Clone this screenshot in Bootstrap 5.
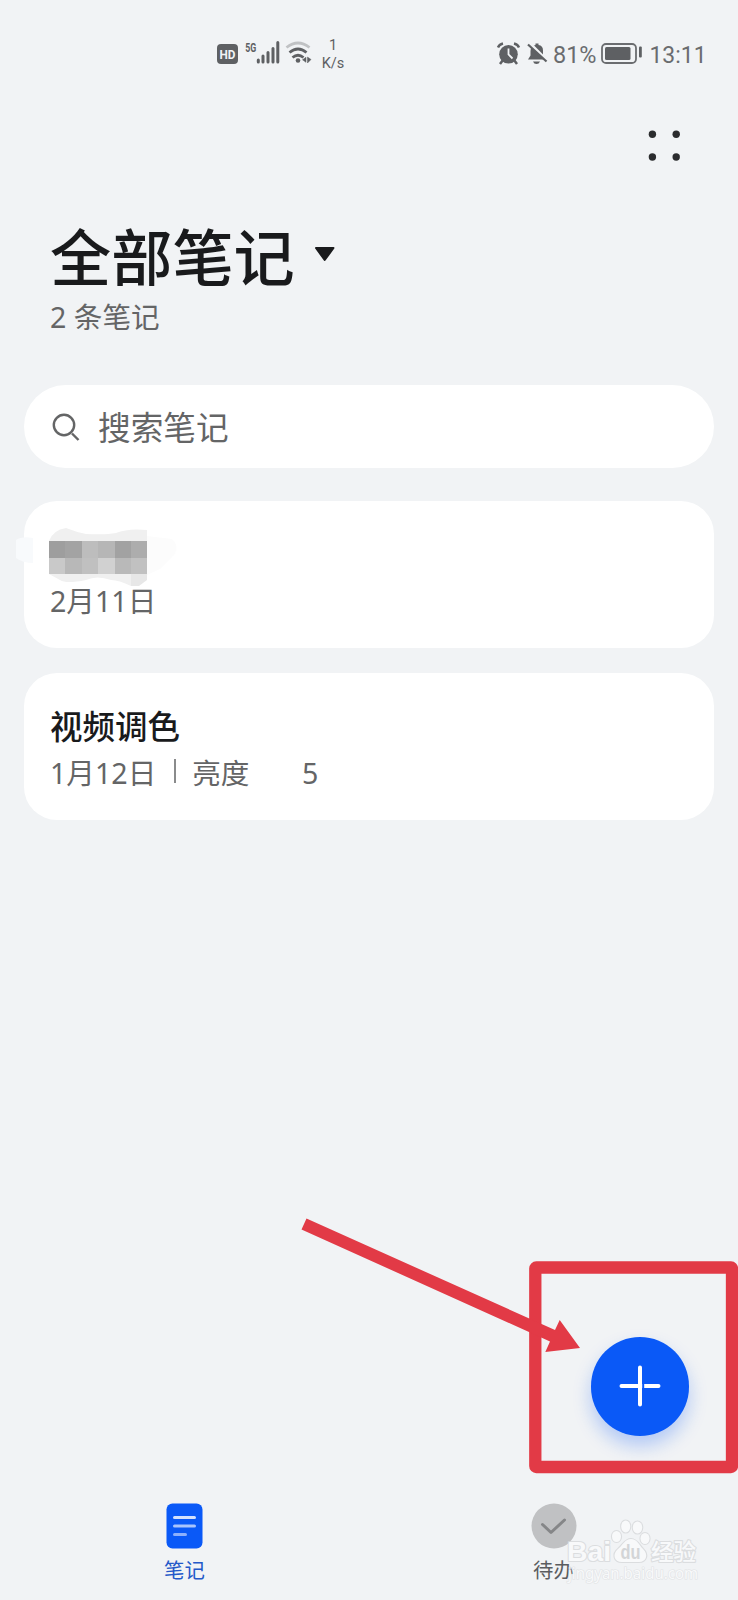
<!DOCTYPE html>
<html lang="zh-CN">
<head>
<meta charset="utf-8">
<meta name="viewport" content="width=device-width, initial-scale=1">
<title>全部笔记</title>
<link href="https://cdn.jsdelivr.net/npm/bootstrap@5.3.0/dist/css/bootstrap.min.css" rel="stylesheet">
<style>
  body { background: #f1f3f5; font-family: "Noto Sans", "Noto Sans CJK SC", sans-serif; color: #191a1c; }
  .screen { width: 738px; height: 1600px; overflow: hidden; }
  .status { height: 80px; padding: 28px 30px 0 216px; color: #5e6063; font-family: Roboto, sans-serif; }
  .status svg { display: block; flex: none; }
  .rate { font-size: 14.5px; line-height: 18px; width: 30px; margin-left: 4px; padding-top: 9px; }
  .stat-text { margin-top: 10px; }
  .toolbar-top { height: 131px; padding: 48px 56px 0; }
  .heading { height: 174px; padding: 11px 49px 0 50px; }
  .heading h1 { font-size: 61.2px; line-height: 66px; font-weight: 500; font-family: "Noto Sans CJK SC", sans-serif; }
  .heading svg { margin: 24px 0 0 19px; }
  .heading .sub { margin-top: 10px; line-height: 38px; }
  .grey { color: #646566; }
  .sub { font-size: 28.6px; line-height: 40px; }
  .search { height: 83px; border-radius: 42px; padding: 0 28px; font-size: 32.7px; line-height: 40px; }
  .search span { margin: 3px 0 0 18px; }
  .note { height: 147px; border-radius: 33px; padding: 34px 26px 0; }
  .note-title { height: 40px; font-size: 32.5px; line-height: 40px; font-weight: 500; }
  .blur-out { left: -9px; top: 25px; }
  .gap-mid { margin-left: 52.5px; }
  .bar { width: 2px; height: 24px; background: #8a8b8c; margin: 6px 16px 0 18px; }
  .tabs { top: 1503px; font-size: 20.4px; line-height: 30px; }
  .tabs span { margin-top: 6px; }
  .fab { left: 590.5px; top: 1337px; width: 98.5px; height: 98.5px; background: #0a59f7; box-shadow: 0 10px 18px rgba(10,89,247,.27); }
  .marks, .wm { left: 0; top: 0; }
</style>
</head>
<body>
<div class="screen position-relative d-flex flex-column">
  <header class="status d-flex align-items-start">
    <svg width="98" height="48" viewBox="216 28 98 48">
      <rect x="217" y="44" width="21" height="20" rx="4" fill="#5e6063"/>
      <text x="227.5" y="58.8" font-size="13" font-weight="700" fill="#f1f3f5" text-anchor="middle" textLength="16" lengthAdjust="spacingAndGlyphs">HD</text>
      <text x="245.3" y="52.2" font-size="13" font-weight="700" fill="#5e6063" textLength="11" lengthAdjust="spacingAndGlyphs">5G</text>
      <g stroke="#5e6063" stroke-width="3" stroke-linecap="round"><path d="M258.3 60v2M263 56v6M268 52.500v9.500M273 48.500v13.500M277.800 42.500v19.500"/></g>
      <g fill="none" stroke="#5e6063" stroke-width="2.800">
        <path d="M286.500 47.500q11.500-9 23 0" stroke="#c0c2c4"/>
        <path d="M289.500 52.500q8.500-7 17 0"/><path d="M292.500 57.500q5.500-4.500 11 0"/>
      </g>
      <circle cx="298" cy="60.500" r="2.300" fill="#5e6063"/>
      <path d="M302.500 59.800l3.500-2.500v5zM307.500 57v6l3.500-3.500z" fill="#5e6063" stroke="#5e6063" stroke-width=".5"/>
    </svg>
    <div class="rate text-center">1<br>K/s</div>
    <div class="d-flex ms-auto align-items-start">
      <svg width="56" height="48" viewBox="496 28 56 48">
        <g fill="#5e6063"><circle cx="508.500" cy="54.300" r="9.300"/>
        <path d="M503 60l-3 4M514 60l3 4" stroke="#5e6063" stroke-width="2.500"/></g>
        <path d="M498 47.500q1-3 5-4M519 47.500q-1-3-5-4" fill="none" stroke="#5e6063" stroke-width="2.400"/>
        <path d="M508.500 48.500v6l4 4" fill="none" stroke="#f1f3f5" stroke-width="1.800"/>
        <path d="M530.500 50v5.500l-2.500 4h18l-3-4v-5q0-5-4.500-5.500v-1.500h-3v1.500q-5 1-5 6zM533 61.500h7q-1 2.500-3.500 2.500t-3.500-2.500z" fill="#5e6063"/>
        <path d="M530 43.500l18 18" stroke="#f1f3f5" stroke-width="3"/>
        <path d="M528 44.500l18.500 17" stroke="#5e6063" stroke-width="2.200"/>
      </svg>
      <svg class="stat-text" width="46" height="36" viewBox="0 0 46 36"><text x="1" y="25" font-size="24" fill="#6a6c6f" textLength="43.5" lengthAdjust="spacingAndGlyphs">81%</text></svg>
      <svg width="50" height="48" viewBox="598 28 50 48">
        <rect x="602" y="44" width="34" height="19" rx="4" fill="none" stroke="#6b6d70" stroke-width="1.800"/>
        <rect x="605" y="47" width="25.500" height="13" rx="1.500" fill="#5e6063"/>
        <rect x="639" y="46.500" width="2.800" height="11" rx="1" fill="#5e6063"/>
      </svg>
      <svg class="stat-text" width="60" height="36" viewBox="0 0 60 36"><text x="1.500" y="25" font-size="24" fill="#6a6c6f" textLength="57" lengthAdjust="spacingAndGlyphs">13:11</text></svg>
    </div>
  </header>

  <div class="toolbar-top d-flex justify-content-end">
    <svg width="36" height="36" viewBox="646 128 36 36" fill="#2b2c2e"><circle cx="652.400" cy="134.300" r="3.700"/><circle cx="676.200" cy="134.300" r="3.700"/><circle cx="652.400" cy="157" r="3.700"/><circle cx="676.200" cy="157" r="3.700"/></svg>
  </div>

  <section class="heading">
    <div class="d-flex"><h1 class="mb-0">全部笔记</h1>
      <svg width="22" height="18" viewBox="0 0 22 18"><path d="M2 2h17.500l-8.800 12z" fill="#191a1c" stroke="#191a1c" stroke-width="2" stroke-linejoin="round"/></svg>
    </div>
    <div class="sub grey">2 条笔记</div>
  </section>

  <main class="d-flex flex-column px-4">
    <div class="search bg-white d-flex align-items-center grey">
      <svg width="28" height="28" viewBox="0 0 28 28" fill="none" stroke="#646566" stroke-width="2.400"><circle cx="12" cy="12" r="10.200"/><path d="M20 20.500l6.500 6.500"/></svg>
      <span>搜索笔记</span>
    </div>

    <article class="note bg-white position-relative" style="margin-top:32.5px">
      <svg class="blur-out position-absolute" width="170" height="64" viewBox="15 526 170 64">
        <path d="M16 540q6-4 17-2v25q-10 0-17-5z" fill="#f8fafc"/>
        <path d="M147 536l25 3q9 9 0 18l-12 12-13 6z" fill="#fcfcfc"/>
        <path d="M49 541q4-11 17-13 10 4 20 6 20 1 30-1 12-5 31-3v48q-7 8-16 8-12-6-20-6-14-5-25 0-20 4-26 0l-11-6z" fill="#f0f0f0"/>
        <g shape-rendering="crispEdges">
          <path d="M49 541h16v17H49z" fill="#9e9e9e"/><path d="M65 541h17v17H65z" fill="#a3a3a3"/><path d="M82 541h16v17H82z" fill="#bdbdbd"/><path d="M98 541h17v17H98z" fill="#b6b6b6"/><path d="M115 541h16v17h-16z" fill="#a2a2a2"/><path d="M131 541h16v17h-16z" fill="#adadad"/>
          <path d="M49 558h16v16H49z" fill="#c9c9c9"/><path d="M65 558h17v16H65z" fill="#b8b8b8"/><path d="M82 558h16v16H82z" fill="#c0c0c0"/><path d="M98 558h17v16H98z" fill="#d1d1d1"/><path d="M115 558h16v16h-16z" fill="#b9b9b9"/><path d="M131 558h16v16h-16z" fill="#c1c1c1"/>
        </g>
        <path d="M131 574h16v6l-8 6h-8z" fill="#e7e7e7"/>
      </svg>
      <div class="note-title"></div>
      <div class="sub grey" style="margin-top:6px">2月11日</div>
    </article>

    <article class="note bg-white" style="margin-top:25.500px">
      <div class="note-title">视频调色</div>
      <div class="sub grey d-flex" style="margin-top:6px"><span>1月12日</span><i class="bar"></i><span>亮度</span><span class="gap-mid">5</span></div>
    </article>
  </main>

  <nav class="tabs position-absolute start-0 w-100 d-flex text-center">
    <div class="w-50 d-flex flex-column align-items-center" style="color:#2459c9">
      <svg width="37" height="46" viewBox="0 0 37 46"><rect x=".5" y=".5" width="36" height="45" rx="6" fill="#0a59f7"/><g stroke-width="3" stroke-linecap="round"><path d="M8.500 14.500h20" stroke="#d3e1fd"/><path d="M8.500 23h20" stroke="#a9c4fc"/><path d="M8.500 31.500h11" stroke="#8db0fb"/></g></svg>
      <span>笔记</span>
    </div>
    <div class="w-50 d-flex flex-column align-items-center" style="color:#5b5d60">
      <svg width="46" height="46" viewBox="0 0 46 46"><circle cx="23" cy="23" r="22.500" fill="#c0c1c3"/><path d="M11.500 21.500l8.500 8 13.500-12.500" fill="none" stroke="#858688" stroke-width="3" stroke-linecap="round" stroke-linejoin="round"/></svg>
      <span>待办</span>
    </div>
  </nav>

  <svg class="wm position-absolute" width="738" height="1600" viewBox="0 0 738 1600">
    <g fill="#fafbfc" stroke="#d8dadc" stroke-width="2.200" paint-order="stroke" stroke-linejoin="round" font-family="'Liberation Sans', sans-serif" opacity=".85">
      <text x="567" y="1560.500" font-size="28" font-weight="700" textLength="44" lengthAdjust="spacingAndGlyphs">Bai</text>
      <ellipse cx="616.500" cy="1536.500" rx="4.500" ry="5.500"/><ellipse cx="625.700" cy="1526.500" rx="4.500" ry="6"/><ellipse cx="637.500" cy="1527.500" rx="4.700" ry="6"/><ellipse cx="645" cy="1538.500" rx="4.500" ry="5.500"/>
      <path d="M631 1539c6 0 8 6 12 10 6 6 3 13-4 13h-17c-8 0-10-8-4-13 5-4 7-10 13-10z"/>
      <text x="651" y="1559.500" font-size="22.500" font-weight="500" font-family="'Noto Sans CJK SC', sans-serif">经验</text>
    </g>
    <text x="568" y="1579" font-size="15.500" fill="#fafbfc" stroke="#dddfe1" stroke-width="1.200" paint-order="stroke" opacity=".8" font-family="'Noto Sans', sans-serif" textLength="130" lengthAdjust="spacingAndGlyphs">jingyan.baidu.com</text>
    <text x="620.500" y="1559" font-size="20" font-weight="700" fill="#d3d5d7" font-family="'Liberation Sans', sans-serif" textLength="20" lengthAdjust="spacingAndGlyphs">du</text>
  </svg>

  <div class="fab position-absolute rounded-circle d-flex align-items-center justify-content-center">
    <svg width="44" height="44" viewBox="0 0 44 44" stroke="#fff" stroke-width="4" stroke-linecap="round"><path d="M3.500 22h37M22 3.500v37"/><path d="M25.200 19.500v5" stroke="#0a59f7" stroke-width="2" stroke-linecap="butt"/></svg>
  </div>
  <svg class="marks position-absolute" width="738" height="1600" viewBox="0 0 738 1600">
    <rect x="535.300" y="1267.500" width="196.700" height="199.500" rx="1" fill="none" stroke="#e23a46" stroke-width="12.300" stroke-linejoin="round"/>
    <path d="M306.500 1218.500L555 1330l4.700-10 20.300 28-34.700 4 4.700-10.500L301.500 1229.500z" fill="#e23a46"/>
  </svg>
</div>
<script src="https://cdn.jsdelivr.net/npm/bootstrap@5.3.0/dist/js/bootstrap.bundle.min.js"></script>
</body>
</html>
